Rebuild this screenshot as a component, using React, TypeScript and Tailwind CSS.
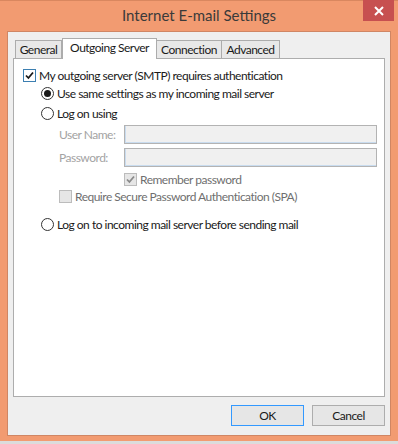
const font = { fontFamily: 'Lato, "Liberation Sans", sans-serif' }

function Radio({ checked }: { checked?: boolean }) {
  return (
    <span className="flex h-[13px] w-[13px] shrink-0 items-center justify-center rounded-full border border-[#333] bg-white">
      {checked && <span className="h-[7px] w-[7px] rounded-full bg-[#1a1a1a]" />}
    </span>
  )
}

function Check({ checked, variant }: { checked?: boolean; variant: 'focus' | 'disabled' }) {
  const box =
    variant === 'focus'
      ? 'border-[#3c7fb1] bg-white'
      : 'border-[#bcbcbc] bg-[#e6e6e6]'
  const stroke = variant === 'focus' ? '#1a1a1a' : '#8a8a8a'
  return (
    <span className={`flex h-[13px] w-[13px] shrink-0 items-center justify-center border ${box}`}>
      {checked && (
        <svg width="9" height="9" viewBox="0 0 9 9">
          <path d="M1 4.5 L3.4 7 L8 1.5" fill="none" stroke={stroke} strokeWidth="1.8" />
        </svg>
      )}
    </span>
  )
}

function Field({ label }: { label: string }) {
  return (
    <div className="flex h-[19px] items-center">
      <span className="w-[65px] text-[#a3a3a3]">{label}</span>
      <div className="h-[19px] w-[253px] border border-[#b3b3b3] bg-[#f0f0f0] shadow-[inset_1px_-1px_0_#c9dcef]" />
    </div>
  )
}

export default function App() {
  return (
    <div
      className="flex h-[444px] w-[398px] flex-col overflow-hidden whitespace-nowrap bg-[#f29b71] text-[12px] leading-none tracking-[-0.5px] text-[#1a1a1a]"
      style={font}
    >
      <div className="relative flex h-[31px] shrink-0 items-center justify-center border-t border-[#d9875f]">
        <span className="pb-[2px] text-[15px] tracking-normal text-[#3a3a3a]">Internet E-mail Settings</span>
        <div className="absolute top-[-1px] right-[4px] flex h-[21px] w-[31px] items-center justify-center bg-[#c75050]">
          <svg width="10" height="10" viewBox="0 0 10 10">
            <path d="M1 1 L9 9 M9 1 L1 9" stroke="#fff" strokeWidth="2" />
          </svg>
        </div>
      </div>

      <div className="mx-[7px] flex h-[405px] shrink-0 flex-col border border-[#d08664] bg-[#efefef] px-[5px] pt-[6px]">
        <div className="flex h-[20px] items-end pl-[2px]">
          <div className="flex h-[18px] w-[47px] items-center justify-center border border-b-0 border-[#acacac] bg-[#e8e8e8]">
            General
          </div>
          <div className="relative z-10 mb-[-1px] flex h-[21px] w-[95px] items-start justify-center border border-b-0 border-[#acacac] bg-white pt-[3px]">
            Outgoing Server
          </div>
          <div className="flex h-[18px] w-[65px] items-center justify-center border border-b-0 border-l-0 border-[#acacac] bg-[#e8e8e8]">
            Connection
          </div>
          <div className="flex h-[18px] w-[58px] items-center justify-center border border-b-0 border-l-0 border-[#acacac] bg-[#e8e8e8]">
            Advanced
          </div>
        </div>

        <div className="flex h-[339px] flex-col border border-[#adadad] bg-white pt-[10px] pl-[9px]">
          <div className="flex h-[13px] items-center gap-[3px]">
            <Check checked variant="focus" />
            <span>My outgoing server (SMTP) requires authentication</span>
          </div>
          <div className="mt-[5px] flex h-[13px] items-center gap-[3px] pl-[18px]">
            <Radio checked />
            <span>Use same settings as my incoming mail server</span>
          </div>
          <div className="mt-[7px] flex h-[13px] items-center gap-[3px] pl-[18px]">
            <Radio />
            <span>Log on using</span>
          </div>
          <div className="mt-[5px] flex flex-col gap-[4px] pl-[36px]">
            <Field label="User Name:" />
            <Field label="Password:" />
          </div>
          <div className="mt-[6px] flex h-[13px] items-center gap-[3px] pl-[101px] text-[#6f6f6f]">
            <Check checked variant="disabled" />
            <span>Remember password</span>
          </div>
          <div className="mt-[4px] flex h-[13px] items-center gap-[3px] pl-[36px] text-[#6f6f6f]">
            <Check variant="disabled" />
            <span>Require Secure Password Authentication (SPA)</span>
          </div>
          <div className="mt-[15px] flex h-[13px] items-center gap-[3px] pl-[18px]">
            <Radio />
            <span>Log on to incoming mail server before sending mail</span>
          </div>
        </div>

        <div className="mt-[8px] flex justify-end gap-[8px]">
          <button
            type="button"
            className="flex h-[21px] w-[73px] items-center justify-center border border-[#3399ff] bg-[#e6e6e6]"
          >
            OK
          </button>
          <button
            type="button"
            className="flex h-[21px] w-[73px] items-center justify-center border border-[#adadad] bg-[#e6e6e6]"
          >
            Cancel
          </button>
        </div>
      </div>

      <div className="mt-[5px] h-[3px] shrink-0 bg-[#dcdcdc]" />
    </div>
  )
}
